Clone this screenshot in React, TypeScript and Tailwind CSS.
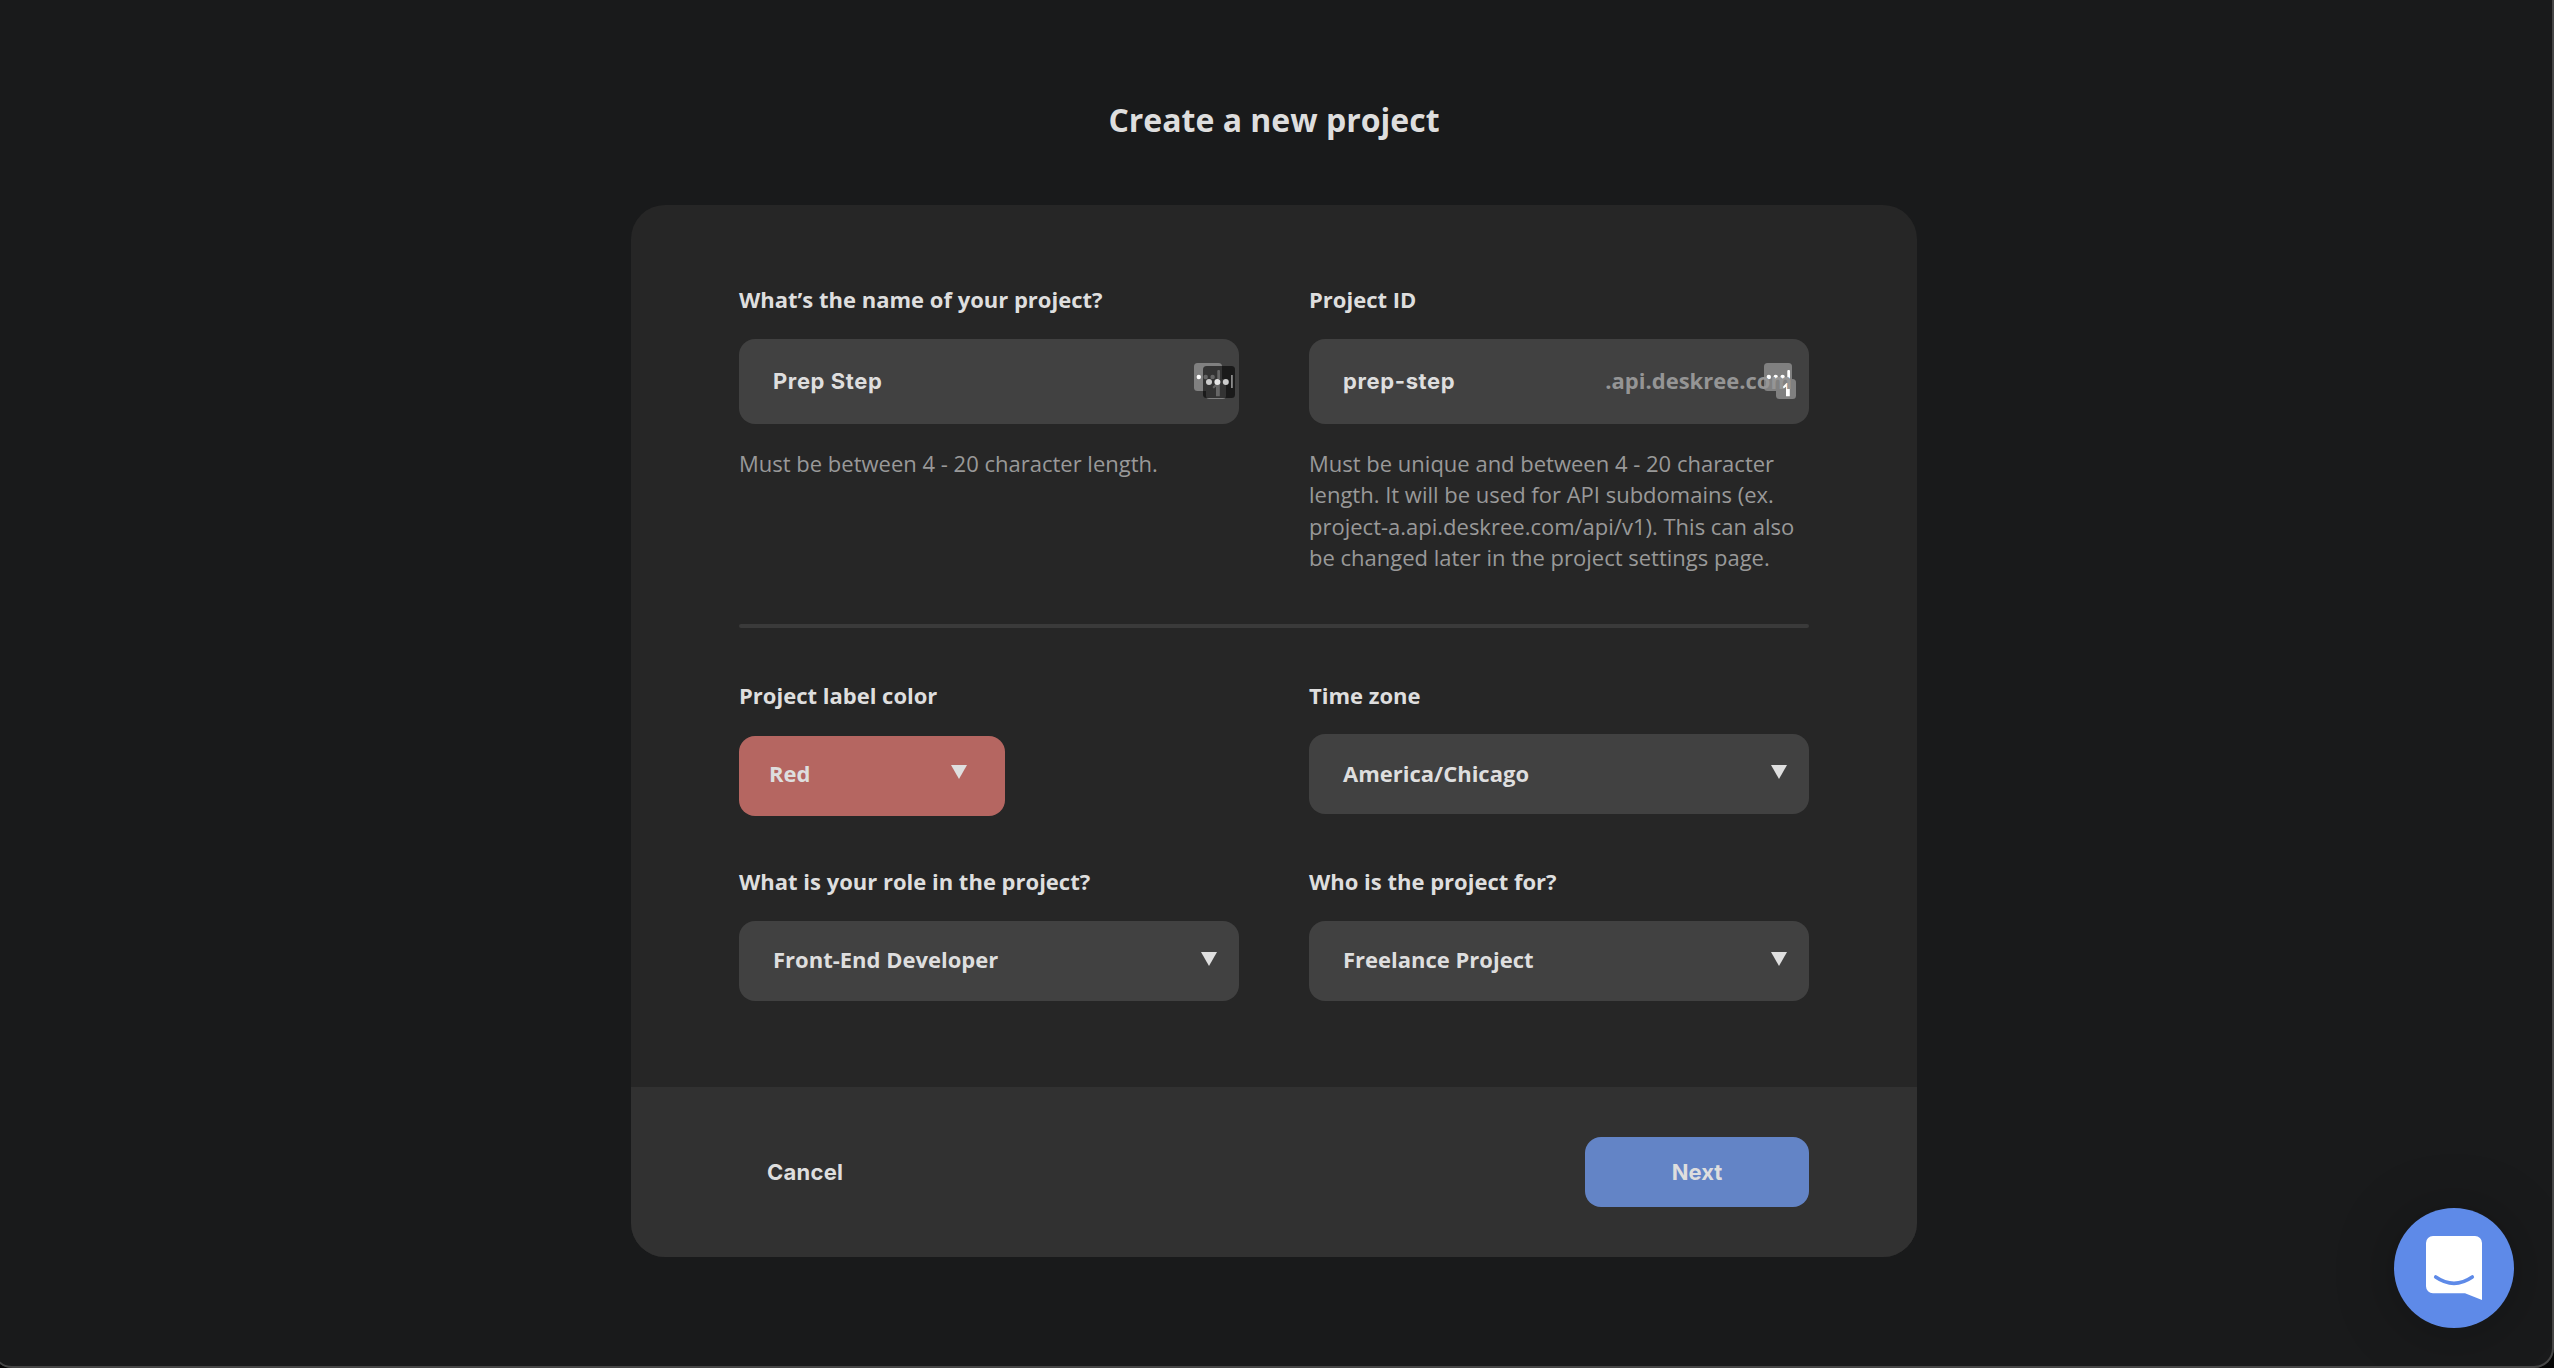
import type { ReactNode } from "react";

function Label({ children }: { children: ReactNode }) {
  return <label className="block h-[30px] text-[22px] leading-[30px] font-bold">{children}</label>;
}

function Help({ children }: { children: ReactNode }) {
  return <p className="mt-[24px] text-[22px] leading-[31.25px] text-[#999999]">{children}</p>;
}

function Caret() {
  return (
    <svg width="16" height="14" viewBox="0 0 16 14" fill="#dfdfdf">
      <path d="M0 0h16L8 14z" />
    </svg>
  );
}

function Select({ value }: { value: string }) {
  return (
    <div className="flex h-20 w-[500px] items-center justify-between rounded-2xl bg-[#414141] pr-[22px] pb-1 pl-[34px] text-[22px] leading-[30px] font-bold">
      <span>{value}</span>
      <Caret />
    </div>
  );
}

/* Password manager badge: a key tile with a small counter tile on its corner */
function Badge() {
  return (
    <g>
      <rect x="0" y="0" width="28" height="28" rx="3.5" fill="#808080" />
      <circle cx="4.8" cy="14" r="2.2" fill="#fff" />
      <circle cx="11.7" cy="14" r="2.2" fill="#fff" />
      <circle cx="18.6" cy="14" r="2.2" fill="#fff" />
      <rect x="23.3" y="7" width="2.7" height="14" rx="1" fill="#fff" />
      <rect x="12" y="16" width="20" height="20" rx="3.5" fill="#808080" />
      <path d="M18.5 24l4-4h3.3v13.2H22v-9.4l-2.3 1.7z" fill="#fff" />
    </g>
  );
}

function NameBadge() {
  return (
    <svg className="absolute top-[24px] right-[4px]" width="41" height="36" viewBox="0 0 41 36">
      <Badge />
      <rect x="9" y="3" width="32" height="32" rx="3.5" fill="#000" fillOpacity="0.6" />
      <circle cx="15" cy="19" r="3" fill="#cccccc" />
      <circle cx="23.4" cy="19" r="3" fill="#e6e6e6" />
      <circle cx="31.8" cy="19" r="3" fill="#cccccc" />
      <rect x="37" y="12" width="1.8" height="13" fill="#8c8c8c" />
    </svg>
  );
}

function IdBadge() {
  return (
    <svg className="absolute top-[24px] right-[13px]" width="32" height="36" viewBox="0 0 32 36">
      <Badge />
    </svg>
  );
}

function ChatLauncher() {
  return (
    <button className="absolute right-[40px] bottom-[40px] h-[120px] w-[120px] rounded-full bg-[#5e8ae8] shadow-[0_4px_60px_rgba(0,0,0,0.25)]">
      <svg width="120" height="120" viewBox="0 0 120 120">
        <path d="M39 28h42a7 7 0 0 1 7 7v57l-17-6.7H39a7 7 0 0 1-7-7V35a7 7 0 0 1 7-7z" fill="#fff" />
        <path d="M41.7 69q18.3 12.6 36.6 0" fill="none" stroke="#5e8ae8" strokeWidth="3.6" strokeLinecap="round" />
      </svg>
    </button>
  );
}

export default function App() {
  return (
    <div className="relative h-[1368px] w-[2554px] overflow-hidden bg-[#191a1b] font-['Open_Sans',sans-serif] text-[#dedede]">
      <main className="flex w-[2548px] flex-col items-center pt-[98px]">
        <h1 className="text-[32px] leading-[44px] font-bold">Create a new project</h1>

        <section className="mt-[63px] w-[1286px] overflow-hidden rounded-[34px] bg-[#262626]">
          <div className="h-[882px] px-[108px] pt-[79px]">
            <div className="flex h-[340px] justify-between">
              <div className="w-[500px]">
                <Label>What’s the name of your project?</Label>
                <div className="relative mt-[25px] flex h-[85px] items-center rounded-2xl bg-[#414141] pb-px pl-[34px]">
                  <span className="font-[Inter,sans-serif] text-[22px] font-bold tracking-[0.6px]">Prep Step</span>
                  <NameBadge />
                </div>
                <Help>Must be between 4 - 20 character length.</Help>
              </div>
              <div className="w-[500px]">
                <Label>Project ID</Label>
                <div className="relative mt-[25px] flex h-[85px] items-center justify-between rounded-2xl bg-[#414141] pr-[17px] pb-px pl-[34px]">
                  <span className="font-[Inter,sans-serif] text-[22px] font-bold tracking-[0.62px]">prep-step</span>
                  <IdBadge />
                  <span className="relative pb-[2px] text-[22px] leading-[30px] font-bold text-[#959595]">.api.deskree.com</span>
                </div>
                <Help>
                  Must be unique and between 4 - 20 character
                  <br />
                  length. It will be used for API subdomains (ex.
                  <br />
                  project-a.api.deskree.com/api/v1). This can also
                  <br />
                  be changed later in the project settings page.
                </Help>
              </div>
            </div>

            <hr className="h-1 rounded-xs border-0 bg-[#3a3a3a]" />

            <div className="mt-[52px] flex h-[186px] justify-between">
              <div className="w-[500px]">
                <Label>Project label color</Label>
                <div className="mt-[26px] flex h-20 w-[266px] items-center justify-between rounded-2xl bg-[#b56661] pr-[38px] pb-[6px] pl-[30px] text-[22px] leading-[30px] font-bold">
                  <span>Red</span>
                  <span className="pb-[2px]">
                    <Caret />
                  </span>
                </div>
              </div>
              <div className="w-[500px]">
                <Label>Time zone</Label>
                <div className="mt-[24px] flex h-20 items-center justify-between rounded-2xl bg-[#414141] pr-[22px] pb-[2px] pl-[34px] text-[22px] leading-[30px] font-bold">
                  <span>America/Chicago</span>
                  <span className="pb-[2px]">
                    <Caret />
                  </span>
                </div>
              </div>
            </div>

            <div className="flex justify-between">
              <div className="flex flex-col gap-[25px]">
                <Label>What is your role in the project?</Label>
                <Select value="Front-End Developer" />
              </div>
              <div className="flex flex-col gap-[25px]">
                <Label>Who is the project for?</Label>
                <Select value="Freelance Project" />
              </div>
            </div>
          </div>

          <footer className="flex h-[170px] items-center justify-between bg-[#313131] px-[108px] font-[Inter,sans-serif] text-[22px]">
            <button className="pl-[28px] font-bold tracking-[0.25px]">Cancel</button>
            <button className="h-[70px] w-[224px] rounded-2xl bg-[#6384c6] font-bold">Next</button>
          </footer>
        </section>
      </main>

      <ChatLauncher />

      {/* Window edge with rounded bottom corners */}
      <div className="pointer-events-none absolute -top-8 right-0 bottom-0 -left-2 rounded-b-[20px] border-2 border-[#464646] shadow-[0_0_0_20px_#050505]" />
    </div>
  );
}
